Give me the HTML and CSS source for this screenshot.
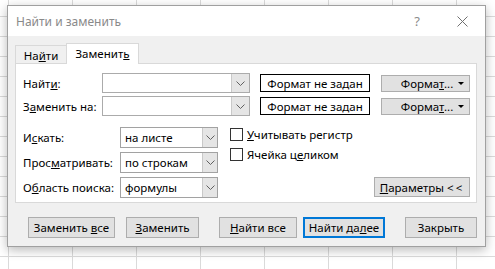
FILE: index.html
```html
<!DOCTYPE html>
<html>
<head>
  <title>Найти и заменить</title>
  <link rel="stylesheet" href="styles.css">
</head>
<body>
  <div class="dialog">
    <div class="titlebar">
      <span class="title">Найти и заменить</span>
      <span class="help">?</span>
      <span class="close">
        <svg width="11" height="11" viewBox="0 0 11 11"><path d="M0.5 0.5 L10.5 10.5 M10.5 0.5 L0.5 10.5" stroke="#707070" stroke-width="1" fill="none"/></svg>
      </span>
    </div>

    <div class="content">
      <div class="tabs">
        <div class="tab">На<u>й</u>ти</div>
        <div class="tab active">Заменит<u>ь</u></div>
      </div>

      <div class="panel">
        <!-- строки поиска и замены -->
        <div class="row">
          <label class="lbl">Найт<u>и</u>:</label>
          <div class="combo wide">
            <span class="val"></span>
            <span class="arrow"><svg width="9" height="5" viewBox="0 0 9 5"><path d="M0.5 0.5 L4.5 4.5 L8.5 0.5" stroke="#606060" fill="none"/></svg></span>
          </div>
          <div class="fmt-box">Формат не задан</div>
          <div class="fmt-btn"><span class="fmt-text">Форма<u>т</u>...</span><span class="tri"></span></div>
        </div>
        <div class="row second">
          <label class="lbl"><span>З<u>а</u>менить на:</span></label>
          <div class="combo wide">
            <span class="val"></span>
            <span class="arrow"><svg width="9" height="5" viewBox="0 0 9 5"><path d="M0.5 0.5 L4.5 4.5 L8.5 0.5" stroke="#606060" fill="none"/></svg></span>
          </div>
          <div class="fmt-box">Формат не задан</div>
          <div class="fmt-btn"><span class="fmt-text">Форма<u>т</u>...</span><span class="tri"></span></div>
        </div>

        <!-- параметры -->
        <div class="options">
          <div class="opt-left">
            <div class="opt-row">
              <label class="lbl long">И<u>с</u>кать:</label>
              <div class="combo small">
                <span class="val">на листе</span>
                <span class="arrow"><svg width="9" height="5" viewBox="0 0 9 5"><path d="M0.5 0.5 L4.5 4.5 L8.5 0.5" stroke="#606060" fill="none"/></svg></span>
              </div>
            </div>
            <div class="opt-row">
              <label class="lbl long">Прос<u>м</u>атривать:</label>
              <div class="combo small">
                <span class="val">по строкам</span>
                <span class="arrow"><svg width="9" height="5" viewBox="0 0 9 5"><path d="M0.5 0.5 L4.5 4.5 L8.5 0.5" stroke="#606060" fill="none"/></svg></span>
              </div>
            </div>
            <div class="opt-row">
              <label class="lbl long">О<u>б</u>ласть поиска:</label>
              <div class="combo small">
                <span class="val">формулы</span>
                <span class="arrow"><svg width="9" height="5" viewBox="0 0 9 5"><path d="M0.5 0.5 L4.5 4.5 L8.5 0.5" stroke="#606060" fill="none"/></svg></span>
              </div>
            </div>
          </div>

          <div class="opt-right">
            <div class="checks">
              <div class="check"><span class="box"></span><span><u>У</u>читывать регистр</span></div>
              <div class="check"><span class="box"></span><span>Ячейка ц<u>е</u>ликом</span></div>
            </div>
            <button class="btn params"><u>П</u>араметры <span class="lt">&lt;&lt;</span></button>
          </div>
        </div>
      </div>

      <div class="actions">
        <button class="btn w-all">Заменить <u>в</u>се</button>
        <button class="btn w-one"><u>З</u>аменить</button>
        <button class="btn w-find"><u>Н</u>айти все</button>
        <button class="btn w-next default">Найти да<u>л</u>ее</button>
        <button class="btn w-close">Закрыть</button>
      </div>
    </div>
  </div>
</body>
</html>
```

FILE: styles.css
```css
body {
  margin: 0;
  width: 495px;
  height: 269px;
  overflow: hidden;
  font-family: "Noto Sans", "Open Sans", sans-serif;
  font-size: 11.5px;
  color: #000;
  background-color: #fff;
  background-image:
    linear-gradient(to right, #dadada 1px, transparent 1px),
    linear-gradient(to bottom, #dadada 1px, transparent 1px);
  background-size: 64px 20px;
  background-position: 8px 16px;
}

u {
  text-underline-offset: 1px;
}

.dialog {
  margin: 5px 0 0 7px;
  width: 479px;
  height: 242px;
  box-sizing: border-box;
  border: 1px solid #a0a0a0;
  background: #f0f0f0;
  box-shadow: 0 3px 10px rgba(0, 0, 0, 0.28);
  display: flex;
  flex-direction: column;
}

.titlebar {
  height: 30px;
  background: #fff;
  display: flex;
  align-items: center;
  padding-left: 8px;
  color: #8a8a8a;
}

.title {
  flex: 1;
  font-size: 12px;
}

.help {
  width: 30px;
  text-align: center;
  font-size: 13px;
  color: #8a8a8a;
  margin-right: 7px;
}

.close {
  width: 46px;
  display: flex;
  justify-content: center;
  align-items: center;
}

.content {
  flex: 1;
  padding: 7px 8px 0 7px;
}

.tabs {
  display: flex;
  align-items: flex-end;
  margin-bottom: -1px;
}

.tab {
  box-sizing: border-box;
  height: 19px;
  width: 51px;
  border: 1px solid #d9d9d9;
  border-right: none;
  background: #f0f0f0;
  display: flex;
  align-items: center;
  justify-content: center;
  padding-top: 1px;
}

.tab.active {
  position: relative;
  z-index: 1;
  height: 21px;
  width: 73px;
  border-right: 1px solid #d9d9d9;
  border-bottom: none;
  background: #fff;
  padding-top: 0;
  padding-bottom: 2px;
}

.panel {
  box-sizing: border-box;
  height: 140px;
  border: 1px solid #d9d9d9;
  background: #fff;
  padding: 9px 6px 5px 7px;
}

.row {
  display: flex;
  align-items: center;
  height: 20px;
}

.row.second {
  margin-top: 3px;
}

.lbl {
  width: 79px;
  flex-shrink: 0;
}

.lbl.long {
  width: 97px;
}

.combo {
  box-sizing: border-box;
  display: flex;
  border: 1px solid #ababab;
  background: #fff;
}

.combo.wide {
  width: 148px;
  height: 20px;
}

.combo.small {
  width: 98px;
  height: 21px;
  border-color: #a2a2a2;
}

.combo .val {
  flex: 1;
  padding-left: 4px;
  line-height: 19px;
}

.combo .arrow {
  width: 17px;
  background: #e5e5e5;
  border-left: 1px solid #c9c9c9;
  display: flex;
  align-items: center;
  justify-content: center;
}

.combo.small .arrow {
  width: 14px;
}

.fmt-box {
  box-sizing: border-box;
  width: 110px;
  height: 18px;
  margin-left: 10px;
  border: 1px solid #000;
  display: flex;
  align-items: center;
  justify-content: center;
}

.fmt-btn {
  box-sizing: border-box;
  width: 89px;
  height: 17px;
  margin-left: 11px;
  border: 1px solid #adadad;
  background: #e1e1e1;
  display: flex;
  align-items: center;
}

.fmt-text {
  flex: 1;
  text-align: center;
  padding-left: 14px;
}

.tri {
  width: 0;
  height: 0;
  border-left: 3px solid transparent;
  border-right: 3px solid transparent;
  border-top: 3px solid #000;
  margin-right: 5px;
}

.options {
  display: flex;
  margin-top: 11px;
  height: 70px;
}

.opt-left {
  display: flex;
  flex-direction: column;
  gap: 4px;
}

.opt-row {
  display: flex;
  align-items: center;
}

.opt-right {
  flex: 1;
  margin-left: 12px;
  display: flex;
  flex-direction: column;
  justify-content: space-between;
}

.checks {
  display: flex;
  flex-direction: column;
  gap: 7px;
  padding-top: 1px;
}

.check {
  display: flex;
  align-items: center;
  gap: 4px;
  height: 13px;
}

.box {
  box-sizing: border-box;
  width: 13px;
  height: 13px;
  border: 1px solid #333;
  background: #fff;
}

.btn {
  box-sizing: border-box;
  font-family: inherit;
  font-size: 11.5px;
  color: #000;
  background: #e1e1e1;
  border: 1px solid #adadad;
  padding: 0;
  height: 21px;
}

.btn.params {
  align-self: flex-end;
  width: 96px;
  height: 20px;
}

.lt {
  letter-spacing: 2px;
}

.actions {
  display: flex;
  margin-top: 14px;
  padding-left: 13px;
}

.w-all { width: 87px; }
.w-one { width: 73px; margin-left: 11px; }
.w-find { width: 78px; margin-left: 20px; }
.w-next { width: 82px; margin-left: 6px; }
.w-close { width: 72px; margin-left: 20px; }

.btn.default {
  border: 2px solid #0078d7;
}
```
